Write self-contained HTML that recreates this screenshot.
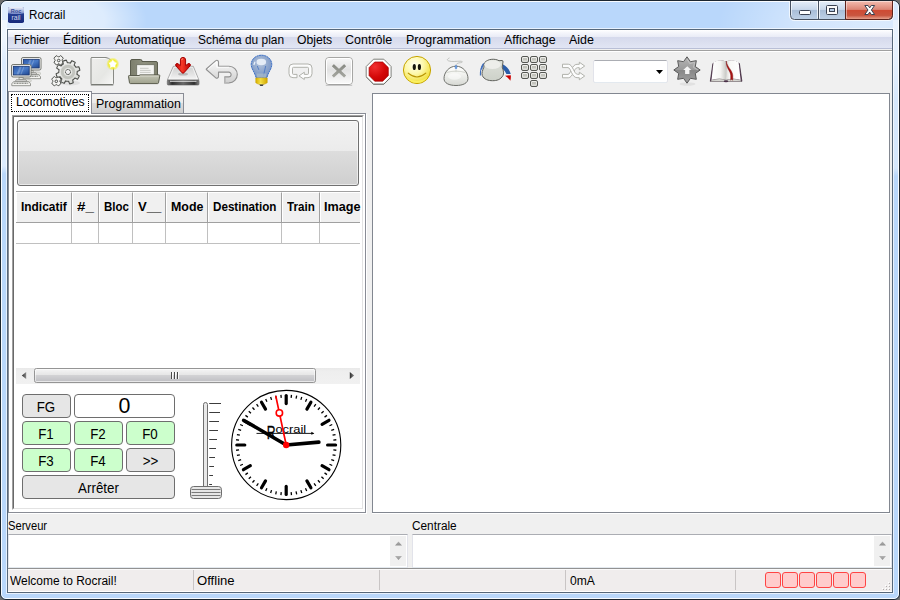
<!DOCTYPE html>
<html lang="fr">
<head>
<meta charset="utf-8">
<title>Rocrail</title>
<style>
html,body{margin:0;padding:0;}
body{width:900px;height:600px;overflow:hidden;background:#6e6e6e;font-family:"Liberation Sans",sans-serif;font-size:12px;color:#000;position:relative;}
div,span{box-sizing:border-box;}
.a{position:absolute;}
#win{position:absolute;left:0;top:0;width:900px;height:600px;border:1px solid #1c2630;border-radius:7px 7px 6px 6px;background:#b9d7fb;overflow:hidden;}
#wp{position:absolute;left:-1px;top:-1px;width:900px;height:600px;}
#glow1{position:absolute;left:-75px;top:-35px;width:240px;height:110px;background:radial-gradient(closest-side,rgba(255,255,255,.60) 0%,rgba(255,255,255,.52) 50%,rgba(255,255,255,0) 85%);}
#glow2{position:absolute;left:700px;top:-60px;width:360px;height:170px;background:radial-gradient(closest-side,rgba(255,255,255,.48) 0%,rgba(255,255,255,.36) 45%,rgba(255,255,255,0) 90%);}
#inhl{position:absolute;left:1px;top:1px;width:898px;height:598px;border:1px solid rgba(255,255,255,.9);border-radius:6px 6px 5px 5px;}
#client{position:absolute;left:7px;top:29px;width:886px;height:564px;border:1px solid #56677a;background:#f0f0f0;overflow:hidden;}
#clhl{position:absolute;left:6px;top:28px;width:888px;height:566px;border:1px solid rgba(255,255,255,.65);}
#pg{position:absolute;left:-8px;top:-30px;width:900px;height:600px;}
.t{position:absolute;white-space:nowrap;line-height:14px;height:14px;transform-origin:0 50%;}
#menubar{left:8px;top:30px;width:884px;height:19px;background:linear-gradient(#ffffff 0px,#f4f5fb 3px,#e9ebf6 7px,#d5d9ec 7px,#dbdfef 12px,#e1e5f4 18px,#b9bfd6 18px,#b9bfd6 19px);}
.ln{position:absolute;height:1px;}
.vl{position:absolute;width:1px;}
/* caption buttons */
.cb{position:absolute;top:0;height:20px;border:1px solid #46566a;border-top:none;}
/* notebook */
#page{left:8px;top:113px;width:358px;height:400px;border:1px solid #898c95;background:#fff;}
#sunk{left:12px;top:115px;width:352px;height:395px;border-top:1px solid #a0a0a0;border-left:1px solid #a0a0a0;border-right:1px solid #fff;border-bottom:1px solid #fff;}
#sunk2{left:13px;top:116px;width:350px;height:393px;border-top:1px solid #696969;border-left:1px solid #696969;border-right:1px solid #e3e3e3;border-bottom:1px solid #e3e3e3;}
#tab1{left:8px;top:91px;width:84px;height:23px;border:1px solid #898c95;border-bottom:none;background:#fff;}
#tab1f{left:11px;top:94px;width:78px;height:18px;border:1px dotted #000;}
#tab2{left:91px;top:93px;width:93px;height:20px;border:1px solid #898c95;border-bottom:none;background:linear-gradient(#f2f2f2 0,#ebebeb 9px,#dddddd 9px,#cfcfcf 19px);}
#bigbtn{left:17px;top:120px;width:342px;height:66px;border:1px solid #707070;border-radius:3px;background:linear-gradient(#f2f2f2 0,#ebebeb 30px,#dddddd 30px,#cfcfcf 64px);box-shadow:inset 0 0 0 1px rgba(255,255,255,.55);}
.hd{position:absolute;top:192px;height:30px;border-top:1px solid #fff;background:#f0f0f0;border-right:1px solid #a0a0a0;border-left:1px solid #fff;}
.rb{position:absolute;border:1px solid #6e6e6e;border-radius:4px;background:#e6e6e6;}
.gr{background:#ccffcc;}
.bt{position:absolute;white-space:nowrap;font:13.8px/14px "Liberation Sans",sans-serif;height:14px;text-align:center;transform:scaleX(.966);}
.led{position:absolute;top:572px;width:16px;height:16px;border:1px solid #ff4444;border-radius:3px;background:#ffcccc;}
.ta{position:absolute;background:#fff;border:1px solid #e2e3ea;border-top-color:#abadb3;border-bottom-color:#e3e9ef;}
</style>
</head>
<body>
<div id="win"><div id="wp">
<div class="a" style="left:1px;top:20px;width:6px;height:156px;background:linear-gradient(rgba(255,255,255,.5) 0,rgba(255,255,255,.5) 146px,rgba(255,255,255,0) 154px)"></div><div class="a" style="left:893px;top:20px;width:6px;height:158px;background:linear-gradient(rgba(255,255,255,.42) 0,rgba(255,255,255,.42) 148px,rgba(255,255,255,0) 156px)"></div><div id="glow1"></div><div id="glow2"></div><div id="inhl"></div><div id="clhl"></div>
<svg class="a" style="left:8px;top:7px" width="16" height="16" viewBox="0 0 16 16">
<defs><linearGradient id="tig" x1="0" y1="0" x2="0" y2="1"><stop offset="0" stop-color="#f0f3fb"/><stop offset="1" stop-color="#7286c6"/></linearGradient>
<linearGradient id="tig2" x1="0" y1="0" x2="0" y2="1"><stop offset="0" stop-color="#2f4da2"/><stop offset="1" stop-color="#17297a"/></linearGradient></defs>
<rect x="0" y="0" width="16" height="16" rx="1.800" fill="url(#tig2)"/>
<path d="M0 1.800a1.800 1.800 0 0 1 1.800-1.800h12.400a1.800 1.800 0 0 1 1.800 1.800v4.400q-8 1.800-16 0z" fill="url(#tig)"/>
<text x="8" y="5.700" font-family="Liberation Sans,sans-serif" font-size="6" font-weight="bold" fill="#3a4e98" text-anchor="middle" textLength="10.500" lengthAdjust="spacingAndGlyphs">Roc</text>
<text x="8" y="13.400" font-family="Liberation Sans,sans-serif" font-size="7" fill="#d4dcf2" text-anchor="middle" textLength="9" lengthAdjust="spacingAndGlyphs">rail</text>
</svg>

<span class="t" style="left:29.23px;top:8px;font:12px/14px 'Liberation Sans',sans-serif;transform:scaleX(0.9722)">Rocrail</span>
<svg class="a" style="left:788px;top:0px" width="108" height="24" viewBox="788 0 108 24">
<defs>
<linearGradient id="cbg" x1="0" y1="0" x2="0" y2="1"><stop offset="0" stop-color="#e6eff9"/><stop offset=".47" stop-color="#c8d8ea"/><stop offset=".5" stop-color="#a8bdd7"/><stop offset="1" stop-color="#bdd0e6"/></linearGradient>
<linearGradient id="cbr" x1="0" y1="0" x2="0" y2="1"><stop offset="0" stop-color="#f4bcb0"/><stop offset=".47" stop-color="#dc8575"/><stop offset=".5" stop-color="#cf4a33"/><stop offset=".8" stop-color="#c9553f"/><stop offset="1" stop-color="#e6a08c"/></linearGradient>
</defs>
<path d="M790.5 0.5V15.5a4 4 0 0 0 4 4H888.5a4 4 0 0 0 4-4V0.5" fill="none" stroke="rgba(255,255,255,.7)" stroke-width="3"/>
<path d="M791 1H845V19H795a4 4 0 0 1-4-4Z" fill="url(#cbg)"/>
<path d="M845 1H892V15a4 4 0 0 1-4 4H845Z" fill="url(#cbr)"/>
<path d="M791.5 1.5H817.5V18.5" fill="none" stroke="rgba(255,255,255,.75)"/>
<path d="M791.5 1.5V15" fill="none" stroke="rgba(255,255,255,.6)"/>
<path d="M819.5 18.5V1.5H844.5" fill="none" stroke="rgba(255,255,255,.75)"/>
<path d="M846.5 18V1.5H891.5" fill="none" stroke="rgba(255,255,255,.45)"/>
<path d="M790.5 0.5V15.5a4 4 0 0 0 4 4H888.5a4 4 0 0 0 4-4V0.5" fill="none" stroke="#46505f"/>
<path d="M845.5 1V19M845.5 19.5H888.5a4 4 0 0 0 4-4V1" fill="none" stroke="#5e231b"/>
<path d="M818.5 1V19" stroke="#46505f"/>
<rect x="799.5" y="10.5" width="11" height="4" rx="1" fill="#fff" stroke="#3a4252"/>
<path d="M826.5 6.5a1 1 0 0 1 1-1h9a1 1 0 0 1 1 1v7a1 1 0 0 1-1 1h-9a1 1 0 0 1-1-1Z" fill="#fafafa" stroke="#3a4252"/>
<rect x="829.5" y="8.500" width="5" height="3" fill="#b4cae4" stroke="#3a4252"/>
<path d="M864.8 5.500h3.300l1.600 2.400 1.600-2.400h3.300l-3.200 4.500 3.200 4.500h-3.300l-1.600-2.400-1.600 2.400h-3.300l3.200-4.500Z" fill="#fff" stroke="#3a4252" stroke-width="1" stroke-linejoin="round"/>
</svg>

<div id="client"><div id="pg">
<div id="menubar" class="a"></div>
<div class="ln" style="left:8px;top:50px;width:884px;background:#a0a0a0"></div>
<div class="ln" style="left:8px;top:51px;width:884px;background:#fff"></div>
<span class="t" style="left:14.12px;top:33px;font:12px/14px 'Liberation Sans',sans-serif;transform:scaleX(0.9771)">Fichier</span>
<span class="t" style="left:63.37px;top:33px;font:12px/14px 'Liberation Sans',sans-serif;transform:scaleX(1.0286)">Édition</span>
<span class="t" style="left:115.00px;top:33px;font:12px/14px 'Liberation Sans',sans-serif;transform:scaleX(1.0448)">Automatique</span>
<span class="t" style="left:198.31px;top:33px;font:12px/14px 'Liberation Sans',sans-serif;transform:scaleX(0.9918)">Schéma du plan</span>
<span class="t" style="left:297.28px;top:33px;font:12px/14px 'Liberation Sans',sans-serif;transform:scaleX(1.0152)">Objets</span>
<span class="t" style="left:345.46px;top:33px;font:12px/14px 'Liberation Sans',sans-serif;transform:scaleX(1.0432)">Contrôle</span>
<span class="t" style="left:405.56px;top:33px;font:12px/14px 'Liberation Sans',sans-serif;transform:scaleX(1.0362)">Programmation</span>
<span class="t" style="left:504.20px;top:33px;font:12px/14px 'Liberation Sans',sans-serif;transform:scaleX(1.0367)">Affichage</span>
<span class="t" style="left:569.20px;top:33px;font:12px/14px 'Liberation Sans',sans-serif;transform:scaleX(1.0348)">Aide</span>
<svg class="a" style="left:8px;top:52px" width="760" height="39" viewBox="8 52 760 39">
<defs>
<linearGradient id="scr" x1="0" y1="0" x2="1" y2="1"><stop offset="0" stop-color="#2c58a8"/><stop offset=".5" stop-color="#4a7cc8"/><stop offset="1" stop-color="#1e4690"/></linearGradient>
<linearGradient id="mon" x1="0" y1="0" x2="0" y2="1"><stop offset="0" stop-color="#f4f4f2"/><stop offset="1" stop-color="#c4c5c0"/></linearGradient>
<linearGradient id="gearg" x1="0" y1="0" x2="1" y2="1"><stop offset="0" stop-color="#fafafa"/><stop offset="1" stop-color="#d3d5d0"/></linearGradient>
<linearGradient id="pageg" x1="0" y1="0" x2="1" y2="1"><stop offset="0" stop-color="#eeeeec"/><stop offset=".6" stop-color="#e6e7e4"/><stop offset="1" stop-color="#f8f8f7"/></linearGradient>
<radialGradient id="starg"><stop offset="0" stop-color="#ffffff"/><stop offset=".35" stop-color="#ffffc0"/><stop offset=".6" stop-color="#f2ee2a"/><stop offset="1" stop-color="#f2ee2a" stop-opacity="0"/></radialGradient>
<linearGradient id="fback" x1="0" y1="0" x2="1" y2="0"><stop offset="0" stop-color="#7d7f6d"/><stop offset=".5" stop-color="#8f917f"/><stop offset="1" stop-color="#80826f"/></linearGradient>
<linearGradient id="ffront" x1="0" y1="0" x2="0" y2="1"><stop offset="0" stop-color="#c3c5b4"/><stop offset="1" stop-color="#a0a28e"/></linearGradient>
<linearGradient id="trayg" x1="0" y1="0" x2="0" y2="1"><stop offset="0" stop-color="#cfcfcf"/><stop offset=".6" stop-color="#e4e4e4"/><stop offset="1" stop-color="#f6f6f6"/></linearGradient>
<linearGradient id="trayb" x1="0" y1="0" x2="1" y2="0"><stop offset="0" stop-color="#8a8a8a"/><stop offset=".15" stop-color="#2e2e2e"/><stop offset=".5" stop-color="#6c6c6c"/><stop offset=".85" stop-color="#303030"/><stop offset="1" stop-color="#8a8a8a"/></linearGradient>
<linearGradient id="redar" x1="0" y1="0" x2="1" y2="0"><stop offset="0" stop-color="#c00000"/><stop offset=".42" stop-color="#f83a28"/><stop offset="1" stop-color="#b80000"/></linearGradient>
<linearGradient id="undog" x1="0" y1="0" x2="0" y2="1"><stop offset="0" stop-color="#fafafa"/><stop offset="1" stop-color="#cfcfcf"/></linearGradient>
<radialGradient id="bulbg" cx=".45" cy=".35" r=".7"><stop offset="0" stop-color="#b4c4dc"/><stop offset=".6" stop-color="#8aa3cb"/><stop offset="1" stop-color="#7590c4"/></radialGradient>
<linearGradient id="bulbb" x1="0" y1="0" x2="1" y2="0"><stop offset="0" stop-color="#d8b000"/><stop offset=".4" stop-color="#fff060"/><stop offset="1" stop-color="#d0a400"/></linearGradient>
<linearGradient id="xbg" x1="0" y1="0" x2="0" y2="1"><stop offset="0" stop-color="#f8f8f8"/><stop offset=".45" stop-color="#e2e2e2"/><stop offset="1" stop-color="#fbfbfb"/></linearGradient>
<linearGradient id="xg" x1="0" y1="0" x2="0" y2="1"><stop offset="0" stop-color="#84867f"/><stop offset="1" stop-color="#b4b5af"/></linearGradient>
<radialGradient id="stopg" cx=".3" cy=".25" r=".9"><stop offset="0" stop-color="#f23030"/><stop offset=".6" stop-color="#d40808"/><stop offset="1" stop-color="#c00000"/></radialGradient>
<radialGradient id="smg" cx=".4" cy=".3" r=".8"><stop offset="0" stop-color="#fffff0"/><stop offset=".42" stop-color="#fdf8ac"/><stop offset=".8" stop-color="#f3e248"/><stop offset="1" stop-color="#e4cb24"/></radialGradient>
<linearGradient id="mouseg" x1="0" y1="0" x2="0" y2="1"><stop offset="0" stop-color="#ffffff"/><stop offset=".35" stop-color="#f4f5f2"/><stop offset="1" stop-color="#d6d8d3"/></linearGradient>
<linearGradient id="knobg" x1="0" y1="0" x2="0" y2="1"><stop offset="0" stop-color="#dfe2db"/><stop offset="1" stop-color="#cdd1c9"/></linearGradient>
<linearGradient id="keyg" x1="0" y1="0" x2="0" y2="1"><stop offset="0" stop-color="#f2f2ef"/><stop offset="1" stop-color="#d8d9d4"/></linearGradient>
<linearGradient id="badgeg" x1="0" y1="0" x2="0" y2="1"><stop offset="0" stop-color="#b4b4b4"/><stop offset=".5" stop-color="#9a9a9a"/><stop offset=".52" stop-color="#888888"/><stop offset="1" stop-color="#a2a2a2"/></linearGradient>
<linearGradient id="bookl" x1="0" y1="0" x2="1" y2="0"><stop offset="0" stop-color="#ffffff"/><stop offset=".6" stop-color="#f6f6f4"/><stop offset="1" stop-color="#c9cac6"/></linearGradient>
<linearGradient id="bookr" x1="0" y1="0" x2="1" y2="0"><stop offset="0" stop-color="#d9dad6"/><stop offset=".25" stop-color="#f8f8f6"/><stop offset="1" stop-color="#ffffff"/></linearGradient>
<g id="key"><rect x=".5" y=".5" width="7" height="6" rx="1.500" fill="url(#keyg)" stroke="#555753"/><rect x="2" y="2" width="4" height="2.500" fill="#c3c4bd"/></g>
<g id="pc">
<path d="M8 13.300h4.200v2.400h-4.200z" fill="#e4e5e0" stroke="#7c7e78" stroke-width=".7"/>
<path d="M5.300 15.700h9.600l.9 1.500h-11.400z" fill="#f2f2ef" stroke="#7c7e78" stroke-width=".7"/>
<rect x=".5" y=".5" width="19.500" height="12.500" rx="1.600" fill="url(#mon)" stroke="#74766f"/>
<rect x="1.500" y="1.500" width="17.500" height="10.500" rx="1" fill="none" stroke="#fff" stroke-width=".7" opacity=".8"/>
<rect x="2.300" y="2.300" width="15.900" height="8.600" fill="url(#scr)" stroke="#16336e" stroke-width=".8"/>
<path d="M8.500 2.700h2.200l-3 7.800h-2.200zM12.300 2.700h1.200l-3 7.800h-1.200z" fill="#fff" opacity=".22"/>
<path d="M.8 19.800l1.700-2.100h15.200l1.800 2.100v1.900h-18.700z" fill="#f4f4f1" stroke="#7c7e78" stroke-width=".8"/>
<path d="M2.800 19.300h14.600" stroke="#6c6e68" stroke-width="1.100" stroke-dasharray="1.100 .5"/>
</g>
</defs>
<!-- 1 computers -->
<ellipse cx="36" cy="73.500" rx="5" ry="1.600" fill="#e4e4e0" stroke="#b0b1ab" stroke-width=".6"/>
<use href="#pc" x="21" y="57"/>
<ellipse cx="26.500" cy="80.800" rx="5" ry="1.500" fill="#e4e4e0" stroke="#b0b1ab" stroke-width=".6"/>
<use href="#pc" x="11" y="64"/>
<!-- 2 gears -->
<path d="M59.20 56.85L60.33 55.61A5.00 5.00 0 0 1 63.29 58.57L62.05 59.70A3.50 3.50 0 0 1 62.05 60.90L63.29 62.03A5.00 5.00 0 0 1 60.33 64.99L59.20 63.75A3.50 3.50 0 0 1 58.00 63.75L56.87 64.99A5.00 5.00 0 0 1 53.91 62.03L55.15 60.90A3.50 3.50 0 0 1 55.15 59.70L53.91 58.57A5.00 5.00 0 0 1 56.87 55.61L58.00 56.85A3.50 3.50 0 0 1 59.20 56.85Z" fill="#f4f4f2" stroke="#555753" stroke-width="1" stroke-linejoin="round"/>
<path d="M57.00 77.75L58.13 76.51A5.00 5.00 0 0 1 61.09 79.47L59.85 80.60A3.50 3.50 0 0 1 59.85 81.80L61.09 82.93A5.00 5.00 0 0 1 58.13 85.89L57.00 84.65A3.50 3.50 0 0 1 55.80 84.65L54.67 85.89A5.00 5.00 0 0 1 51.71 82.93L52.95 81.80A3.50 3.50 0 0 1 52.95 80.60L51.71 79.47A5.00 5.00 0 0 1 54.67 76.51L55.80 77.75A3.50 3.50 0 0 1 57.00 77.75Z" fill="#f4f4f2" stroke="#555753" stroke-width="1" stroke-linejoin="round"/>
<ellipse cx="70" cy="83" rx="10" ry="2.500" fill="#000" opacity=".06"/>
<path d="M70.30 63.09L71.91 60.65A12.00 12.00 0 0 1 75.22 62.42L74.10 65.11A9.20 9.20 0 0 1 75.93 67.33L78.79 66.74A12.00 12.00 0 0 1 79.88 70.33L77.18 71.44A9.20 9.20 0 0 1 76.91 74.30L79.35 75.91A12.00 12.00 0 0 1 77.58 79.22L74.89 78.10A9.20 9.20 0 0 1 72.67 79.93L73.26 82.79A12.00 12.00 0 0 1 69.67 83.88L68.56 81.18A9.20 9.20 0 0 1 65.70 80.91L64.09 83.35A12.00 12.00 0 0 1 60.78 81.58L61.90 78.89A9.20 9.20 0 0 1 60.07 76.67L57.21 77.26A12.00 12.00 0 0 1 56.12 73.67L58.82 72.56A9.20 9.20 0 0 1 59.09 69.70L56.65 68.09A12.00 12.00 0 0 1 58.42 64.78L61.11 65.90A9.20 9.20 0 0 1 63.33 64.07L62.74 61.21A12.00 12.00 0 0 1 66.33 60.12L67.44 62.82A9.20 9.20 0 0 1 70.30 63.09Z" fill="url(#gearg)" stroke="#4c4e4a" stroke-width="1.100" stroke-linejoin="round"/>
<circle cx="68" cy="72" r="7.700" fill="#c2c4be"/>
<circle cx="68" cy="72" r="7.700" fill="none" stroke="#e6e6e3" stroke-width=".8"/>
<circle cx="68" cy="72" r="4.300" fill="#e4e5e1"/>
<circle cx="68" cy="72" r="2.500" fill="#f0f0f0" stroke="#3e403c" stroke-width="1" stroke-dasharray="1.600 .5"/>
<circle cx="58.700" cy="60.500" r="1.300" fill="#f0f0f0" stroke="#4c4e4a" stroke-width="1"/>
<circle cx="56.300" cy="81.300" r="1.300" fill="#f0f0f0" stroke="#4c4e4a" stroke-width="1"/>
<!-- 3 new -->
<path d="M91.500 57.500h14.500q5 1 7.500 6.500v19.500a1 1 0 0 1-1 1h-20.500a1 1 0 0 1-1-1v-25a1 1 0 0 1 1-1z" fill="url(#pageg)" stroke="#888a85"/>
<path d="M92.500 58.500h13" stroke="#fff" opacity=".8"/>
<path d="M90.800 84.900h22.500" stroke="#6e706b" stroke-width="1.200" opacity=".85"/>
<circle cx="112.800" cy="64" r="6.600" fill="url(#starg)"/>
<path d="M112.800 59.600l1.350 2.850 3.050.4-2.250 2.100.6 3.050-2.750-1.500-2.750 1.500.6-3.050-2.250-2.100 3.050-.4z" fill="#fff"/>
<!-- 4 folder -->
<path d="M130.500 61a1.500 1.500 0 0 1 1.500-1.500h8.500a1.500 1.500 0 0 1 1.500 1.500v.5h14a1.500 1.500 0 0 1 1.500 1.500v13h-27z" fill="url(#fback)" stroke="#595b4c"/>
<rect x="136.700" y="64.700" width="17.600" height="11" fill="#f4f4f2" stroke="#6b6d5f" stroke-width=".8"/>
<path d="M140 68.300h8.600M140 70.400h10.600M140 72.400h10.600" stroke="#c4c5c0" stroke-width=".9"/>
<path d="M128.500 76.300a.8.800 0 0 1 .8-.8h9.700l1-.6h19a.8.800 0 0 1 .8.900l-1.300 7a1 1 0 0 1-1 .8h-27a1 1 0 0 1-1-.8z" fill="url(#ffront)" stroke="#595b4c"/>
<path d="M129.800 76.600h9.500l1-.6h18.300" stroke="#dfe0d4" stroke-width=".8" fill="none"/>
<!-- 5 download -->
<path d="M173.300 66.300h20l5.600 13.700h-31.600z" fill="url(#trayg)" stroke="#9c9c9c" stroke-width=".8"/>
<path d="M174 67.200h18.600l4.800 12h-28.400z" fill="none" stroke="#fff" stroke-width=".8" opacity=".8"/>
<ellipse cx="183" cy="74" rx="5" ry="1.600" fill="#b9b9b9"/>
<rect x="167.300" y="80" width="31.700" height="5" rx="1" fill="url(#trayb)" stroke="#5a5a5a" stroke-width=".6"/>
<path d="M170 81.200h26.500" stroke="#e8e8e8" stroke-width="1.100"/>
<path d="M180.400 60a2.600 2.600 0 0 1 5.200 0v5.600l2.400-1.800a1.500 1.500 0 0 1 2.100 2.100l-6.300 7a1.100 1.100 0 0 1-1.600 0l-6.300-7a1.500 1.500 0 0 1 2.100-2.100l2.400 1.800z" fill="url(#redar)" stroke="#a40000" stroke-width="1" stroke-linejoin="round"/>
<path d="M181.600 60.200a1.500 1.500 0 0 1 1.400-1.500" stroke="#ff9a80" stroke-width=".8" fill="none"/>
<!-- 6 undo -->
<path d="M206.300 69l9.500-8.300a1.600 1.600 0 0 1 2.700 1.200v4.400h10.500a8.300 8.300 0 0 1 0 16.600h-4.300v-6h4a2.400 2.400 0 0 0 0-4.800h-10.200v4.500a1.600 1.600 0 0 1-2.700 1.200l-9.500-8.300a.4.400 0 0 1 0-.5z" fill="url(#undog)" stroke="#919191" stroke-width="1.100" stroke-linejoin="round"/>
<path d="M224.800 77.200v5.400h4.300" stroke="#b8b8b8" stroke-width="1.300" fill="none"/>
<path d="M208 69l8.800-7.400v5.700h12.200" stroke="#fff" stroke-width=".9" fill="none" opacity=".9"/>
<!-- 7 bulb -->
<path d="M261.500 55.200c6 0 10.300 4.300 10.300 9.300 0 4.200-3.500 7.500-4.900 13.300h-10.800c-1.400-5.800-4.900-9.100-4.900-13.300 0-5 4.300-9.300 10.300-9.300z" fill="url(#bulbg)" stroke="#3f72c6" stroke-width="1" stroke-dasharray="2.200 .5"/>
<ellipse cx="261.300" cy="62" rx="4.800" ry="3.300" fill="#e9f0f8" opacity=".92"/>
<path d="M254 64.500l.8-2.300" stroke="#e9f0f8" stroke-width="1.300" stroke-linecap="round"/>
<path d="M257.300 66l1.500 3.800M265.700 66l-2.200 9.500" stroke="#4d78c2" stroke-width=".9" fill="none"/>
<path d="M256.500 73.500h10l-.6 4.200h-8.800z" fill="#a9bcc9" opacity=".7"/>
<path d="M255.800 78h11.400v4.800q-2 1.700-5.700 1.700t-5.700-1.700z" fill="url(#bulbb)" stroke="#c8a000" stroke-width=".6"/>
<path d="M256 80h11M256 82h11" stroke="#d9b400" stroke-width=".6"/>
<path d="M259.300 84.500h4.400l-1 1.400h-2.400z" fill="#3c3c3c"/>
<!-- 8 repeat -->
<path d="M297 77.700h-4a4 4 0 0 1-4-4v-5.700a4 4 0 0 1 4-4h15a4 4 0 0 1 4 4v5.700a4 4 0 0 1-4 4h-3.700v1.800l-5.300-3.600 5.300-3.700v2.200h3.200a1 1 0 0 0 1-1v-5.100a1 1 0 0 0-1-1h-14a1 1 0 0 0-1 1v5.100a1 1 0 0 0 1 1h3.500z" fill="#fcfcfc" stroke="#b1b2ac" stroke-width="1" stroke-linejoin="round"/>
<!-- 9 x button -->
<rect x="325.500" y="57.500" width="27" height="27" rx="3.500" fill="url(#xbg)" stroke="#a6a6a4"/>
<rect x="326.500" y="58.500" width="25" height="25" rx="2.500" fill="none" stroke="#fff"/>
<path d="M325.800 85.300h26.400" stroke="#8d8d8b" opacity=".5"/>
<path d="M332.900 65.200l12.200 11.300M345.100 65.200l-12.200 11.300" stroke="url(#xg)" stroke-width="2.900"/>
<path d="M332.900 65.200l12.200 11.300M345.100 65.200l-12.200 11.300" stroke="#91938c" stroke-width="2.900" opacity=".45"/>
<!-- 10 stop -->
<path d="M373.500 59.200h10.300l7.300 7.300v10.300l-7.300 7.300h-10.300l-7.300-7.300v-10.300z" fill="#fff" stroke="#80827c" stroke-width="1"/>
<path d="M374.700 62h8l5.600 5.600v8l-5.600 5.600h-8l-5.600-5.600v-8z" fill="url(#stopg)" stroke="#a40000" stroke-width=".7"/>
<path d="M366.300 77l7.200 7.300h10.300l7.300-7.300" stroke="#55564f" stroke-width="1" fill="none" opacity=".55"/>
<!-- 11 smiley -->
<circle cx="417" cy="70" r="13.600" fill="url(#smg)" stroke="#c6a400" stroke-width="1"/>
<path d="M406 76.500a12.500 12.500 0 0 0 22 0a16 16 0 0 1-22 0z" fill="#fbf264" opacity=".8"/>
<ellipse cx="414.300" cy="67" rx="1.600" ry="3.100" fill="#16160e"/>
<ellipse cx="419.400" cy="67" rx="1.600" ry="3.100" fill="#16160e"/>
<path d="M408.200 73.200q8.800 7.600 17.600 0" stroke="#b89200" stroke-width="1.100" fill="none" stroke-linecap="round"/>
<!-- 12 mouse -->
<path d="M456 66.200c7.200 0 12 6.400 12 12.300 0 4.600-5 7-12 7s-12-2.400-12-7c0-5.900 4.800-12.300 12-12.300z" fill="url(#mouseg)" stroke="#6f716c" stroke-width="1"/>
<path d="M446 72.600q10-3 20 0" stroke="#d6d8d2" stroke-width="1.100" fill="none"/>
<ellipse cx="454.500" cy="76.500" rx="6.500" ry="3.200" fill="#fff" opacity=".5"/>
<path d="M456 69.500v2.600" stroke="#d0d2cc" stroke-width=".8"/>
<path d="M456 66.300c-.3-3 2-3.300 4.500-3.600s2.600-1.500-.5-1.500-8.500.8-11.300-.3-.6-2.300.8-3" stroke="#b4b6b2" stroke-width=".8" fill="none"/>
<rect x="455.100" y="65.300" width="1.800" height="3.600" rx=".9" fill="#6c9ede" stroke="#4a7ccc" stroke-width=".4"/>
<!-- 13 knob -->
<path d="M483 64.500q-3 4.500-2.600 11" stroke="#3f6fbd" stroke-width="1.100" fill="none"/>
<path d="M483.800 63.500q-2 3-2.400 6" stroke="#3f6fbd" stroke-width="1.600" fill="none"/>
<path d="M502.800 64.200q6.200 3.300 8 9.800l-4.400 0q-1.200-3.400-4.400-5.200z" fill="#2c5ea9"/>
<path d="M505 75.800l5.800-.6q.3 3-.5 5.600q-2-3.200-5.300-5z" fill="#cc0000"/>
<path d="M484.800 62.500c2.600-3.300 9.800-4.400 14.200-1.800l3-.2q1.200 0 1 1.500l-.8 5.100c1.500 4 1.800 6.600.8 8.400-2.400 4.200-6.200 5.200-10.400 5.200s-8.600-1.200-10.300-5.200c-.9-2.300.3-5.400 1.600-8.300q-.3-2.600.9-4.700z" fill="url(#knobg)" stroke="#5f615c" stroke-width="1"/>
<ellipse cx="492.500" cy="64.600" rx="8.200" ry="4.300" fill="#edeeea"/>
<!-- 14 keypad -->
<use href="#key" x="521" y="56"/><use href="#key" x="530" y="56"/><use href="#key" x="539" y="56"/>
<use href="#key" x="521" y="64"/><use href="#key" x="530" y="64"/><use href="#key" x="539" y="64"/>
<use href="#key" x="521" y="72"/><use href="#key" x="530" y="72"/><use href="#key" x="539" y="72"/>
<use href="#key" x="530" y="80"/>
<!-- 15 shuffle -->
<g fill="#fcfcfc" stroke="#b1b2ac" stroke-width="1" stroke-linejoin="round">
<path d="M562.500 77.800h5.800c4.600 0 5.600-10.100 9.200-10.100h1.800v2.100l5.400-3.800-5.400-3.800v2.100h-2.300c-5.200 0-6.200 10.100-9 10.100h-5.500z"/>
<path d="M562.500 64.200h5.800c4.600 0 5.600 10.100 9.200 10.100h1.800v-2.100l5.400 3.800-5.400 3.800v-2.100h-2.300c-5.200 0-6.200-10.100-9-10.100h-5.500z"/>
</g>
<!-- 16 combo -->
<rect x="593.500" y="60.500" width="74" height="22" rx="1.500" fill="#fff" stroke="#e2e3ea"/>
<path d="M594.500 60.500h72" stroke="#abadb3"/>
<path d="M594.500 82.500h72" stroke="#e3e9ef"/>
<path d="M656 70h7l-3.500 4z" fill="#000"/>
<!-- 17 badge -->
<ellipse cx="687.500" cy="84" rx="8" ry="1.800" fill="#000" opacity=".06"/>
<path d="M687.00 56.80L690.44 61.69L696.33 60.67L695.31 66.56L700.20 70.00L695.31 73.44L696.33 79.33L690.44 78.31L687.00 83.20L683.56 78.31L677.67 79.33L678.69 73.44L673.80 70.00L678.69 66.56L677.67 60.67L683.56 61.69Z" fill="url(#badgeg)" stroke="#5a5a5a" stroke-width="1" stroke-linejoin="round"/>
<path d="M687 59.200l2.700 4.300 4.900-1.100-1.100 4.900 4.400 2.700" fill="none" stroke="#d0d0d0" stroke-width=".8" opacity=".8"/>
<path d="M687.300 66.300l4 3.700h-1.900v4h-4.300v-4h-1.900z" fill="#f4f4f4"/>
<!-- 18 book -->
<path d="M710.300 81.300l2.600-17.800q6.500-4.300 13-1.600 7-2.700 13.500 1.600l2.500 17.800z" fill="#5b3d57" stroke="#3d2a3b" stroke-width=".8" stroke-linejoin="round"/>
<path d="M713.500 62.300q6.300-3.600 12.400-.9l.2 18.500q-6.800-2.300-14.600.2z" fill="url(#bookl)"/>
<path d="M738.600 62.300q-6.300-3.600-12.400-.9l-.2 18.500q6.800-2.300 14.600.2z" fill="url(#bookr)"/>
<path d="M711.500 80.300q7.800-2.600 14.500-.3q6.700-2.300 14.500.3l.6 1h-30.200z" fill="#dcddd8" stroke="#a8a9a4" stroke-width=".5"/>
<ellipse cx="726" cy="81.300" rx="2.300" ry="1" fill="#4a3048"/>
<path d="M726.400 61.200c.5 6 6.300 9 6.400 14.500l0 4.600-1.100-1-1 1 0-4.600c-.1-5-5-7.500-4.300-14.500z" fill="#a81414" stroke="#7e0c0c" stroke-width=".4"/>
</svg>

<!-- notebook -->
<div class="a" style="left:9px;top:114px;width:358px;height:400px;background:#fff"></div>
<div class="ln" style="left:372px;top:513px;width:518px;background:#fff"></div>
<div id="page" class="a"></div>
<div id="sunk" class="a"></div><div id="sunk2" class="a"></div>
<div id="tab2" class="a"></div>
<div id="tab1" class="a"></div><div id="tab1f" class="a"></div>
<div id="bigbtn" class="a"></div>
<!-- grid -->
<div class="ln" style="left:16px;top:191px;width:344px;background:#a0a0a0"></div>

<div class="hd" style="left:16px;width:56px"></div>
<div class="hd" style="left:72px;width:27px"></div>
<div class="hd" style="left:99px;width:34px"></div>
<div class="hd" style="left:133px;width:33px"></div>
<div class="hd" style="left:166px;width:42px"></div>
<div class="hd" style="left:208px;width:74px"></div>
<div class="hd" style="left:282px;width:38px"></div>
<div class="hd" style="left:320px;width:40px;border-right:none"></div>
<div class="ln" style="left:16px;top:222px;width:344px;background:#a0a0a0"></div>
<div class="ln" style="left:16px;top:243px;width:344px;background:#c0c0c0"></div>
<div class="vl" style="left:71px;top:223px;height:20px;background:#c0c0c0"></div>
<div class="vl" style="left:98px;top:223px;height:20px;background:#c0c0c0"></div>
<div class="vl" style="left:132px;top:223px;height:20px;background:#c0c0c0"></div>
<div class="vl" style="left:165px;top:223px;height:20px;background:#c0c0c0"></div>
<div class="vl" style="left:207px;top:223px;height:20px;background:#c0c0c0"></div>
<div class="vl" style="left:281px;top:223px;height:20px;background:#c0c0c0"></div>
<div class="vl" style="left:319px;top:223px;height:20px;background:#c0c0c0"></div>
<span class="t" style="left:15.88px;top:95px;font:12px/14px 'Liberation Sans',sans-serif;transform:scaleX(1.0182)">Locomotives</span>
<span class="t" style="left:95.67px;top:97px;font:12px/14px 'Liberation Sans',sans-serif;transform:scaleX(1.0350)">Programmation</span>
<span class="t" style="left:20.71px;top:200px;font:bold 12px/14px 'Liberation Sans',sans-serif;transform:scaleX(0.9933)">Indicatif</span>
<span class="t" style="left:77.00px;top:200px;font:bold 12px/14px 'Liberation Sans',sans-serif;transform:scaleX(1.2615)">#_</span>
<span class="t" style="left:104.04px;top:200px;font:bold 12px/14px 'Liberation Sans',sans-serif;transform:scaleX(0.9583)">Bloc</span>
<span class="t" style="left:138.00px;top:200px;font:bold 12px/14px 'Liberation Sans',sans-serif;transform:scaleX(1.0952)">V__</span>
<span class="t" style="left:170.97px;top:200px;font:bold 12px/14px 'Liberation Sans',sans-serif;transform:scaleX(1.0333)">Mode</span>
<span class="t" style="left:213.33px;top:200px;font:bold 12px/14px 'Liberation Sans',sans-serif;transform:scaleX(0.9703)">Destination</span>
<span class="t" style="left:287.10px;top:200px;font:bold 12px/14px 'Liberation Sans',sans-serif;transform:scaleX(0.9679)">Train</span>
<span class="t" style="left:323.95px;top:200px;font:bold 12px/14px 'Liberation Sans',sans-serif;transform:scaleX(1.0545)">Image</span>
<svg class="a" style="left:16px;top:368px" width="344" height="16" viewBox="16 368 344 16">
<defs>
<linearGradient id="thg" x1="0" y1="0" x2="0" y2="1"><stop offset="0" stop-color="#f6f6f6"/><stop offset=".46" stop-color="#e6e6e6"/><stop offset=".5" stop-color="#d2d2d4"/><stop offset=".88" stop-color="#c2c2c6"/><stop offset="1" stop-color="#dadada"/></linearGradient>
<linearGradient id="arg" x1="0" y1="0" x2="1" y2="0"><stop offset="0" stop-color="#2c2c2c"/><stop offset="1" stop-color="#8c8c8c"/></linearGradient>
<linearGradient id="arg2" x1="1" y1="0" x2="0" y2="0"><stop offset="0" stop-color="#8c8c8c"/><stop offset="1" stop-color="#2c2c2c"/></linearGradient>
<linearGradient id="trk" x1="0" y1="0" x2="0" y2="1"><stop offset="0" stop-color="#e9e9e9"/><stop offset=".2" stop-color="#eeeeee"/><stop offset="1" stop-color="#f1f1f1"/></linearGradient>
</defs>
<rect x="16" y="368" width="344" height="16" fill="url(#trk)"/>
<rect x="34.500" y="368.500" width="281" height="14" rx="2" fill="url(#thg)" stroke="#959595"/>
<rect x="35.500" y="369.500" width="279" height="12" rx="1" fill="none" stroke="#fff" opacity=".55"/>
<path d="M21.800 375.500l4.400-3.600v7.200z" fill="url(#arg2)"/>
<path d="M354.200 375.500l-4.400-3.600v7.200z" fill="url(#arg)"/>
<path d="M171.500 372v7M174.500 372v7M177.500 372v7" stroke="#4a4a4a" stroke-width="1"/>
<path d="M172.500 372v7M175.500 372v7M178.500 372v7" stroke="#fff" stroke-width="1" opacity=".85"/>
</svg>

<!-- buttons -->
<div class="rb" style="left:22px;top:394px;width:49px;height:24px"></div>
<div class="rb" style="left:74px;top:394px;width:101px;height:24px;background:#fff"></div>
<div class="rb gr" style="left:22px;top:421px;width:49px;height:24px"></div>
<div class="rb gr" style="left:74px;top:421px;width:49px;height:24px"></div>
<div class="rb gr" style="left:126px;top:421px;width:49px;height:24px"></div>
<div class="rb gr" style="left:22px;top:448px;width:49px;height:24px"></div>
<div class="rb gr" style="left:74px;top:448px;width:49px;height:24px"></div>
<div class="rb" style="left:126px;top:448px;width:49px;height:24px"></div>
<div class="rb" style="left:22px;top:475px;width:153px;height:24px"></div>
<span class="bt" style="left:22px;width:48px;top:401px">FG</span>
<span class="bt" style="left:74px;width:101px;top:394px;font-size:21.33px;line-height:24px;height:24px;transform:none">0</span>
<span class="bt" style="left:22px;width:48px;top:428px">F1</span>
<span class="bt" style="left:74px;width:48px;top:428px">F2</span>
<span class="bt" style="left:126px;width:48px;top:428px">F0</span>
<span class="bt" style="left:22px;width:48px;top:455px">F3</span>
<span class="bt" style="left:74px;width:48px;top:455px">F4</span>
<span class="bt" style="left:126px;width:49px;top:455px">&gt;&gt;</span>
<span class="bt" style="left:22px;width:153px;top:482px">Arrêter</span>
<svg class="a" style="left:186px;top:398px" width="40" height="104" viewBox="186 398 40 104">
<rect x="203.500" y="402.500" width="4" height="86" rx="2" fill="#e8e8e8" stroke="#707070"/>
<g stroke="#3c3c3c" stroke-width="1">
<path d="M209.200 403.500H221"/><path d="M209.200 412.500H220"/><path d="M209.200 421.500H219"/><path d="M209.200 430.500H218"/><path d="M209.200 439.500H217"/><path d="M209.200 448.500H216"/><path d="M209.200 457.500H215"/><path d="M209.200 466.500H214"/><path d="M209.200 475.500H213"/><path d="M209.200 484.500H212"/>
</g>
<rect x="190.500" y="486.500" width="31" height="12" rx="3" fill="#e6e6e6" stroke="#6e6e6e"/>
<path d="M191.500 489.500h29M191.500 492.500h29M191.500 495.500h29" stroke="#7a7a7a" stroke-width="1"/>
</svg>

<svg class="a" style="left:228px;top:387px" width="117" height="117" viewBox="228 387 117 117">
<circle cx="286.2" cy="445" r="54.6" fill="#fff" stroke="#000" stroke-width="1.100"/>
<path d="M286.20 403.60L286.20 395.60" stroke="#000" stroke-width="3.200" stroke-linecap="round"/>
<path d="M306.90 409.15L310.90 402.22" stroke="#000" stroke-width="3.200" stroke-linecap="round"/>
<path d="M322.05 424.30L328.98 420.30" stroke="#000" stroke-width="3.200" stroke-linecap="round"/>
<path d="M327.60 445.00L335.60 445.00" stroke="#000" stroke-width="3.200" stroke-linecap="round"/>
<path d="M322.05 465.70L328.98 469.70" stroke="#000" stroke-width="3.200" stroke-linecap="round"/>
<path d="M306.90 480.85L310.90 487.78" stroke="#000" stroke-width="3.200" stroke-linecap="round"/>
<path d="M286.20 486.40L286.20 494.40" stroke="#000" stroke-width="3.200" stroke-linecap="round"/>
<path d="M265.50 480.85L261.50 487.78" stroke="#000" stroke-width="3.200" stroke-linecap="round"/>
<path d="M250.35 465.70L243.42 469.70" stroke="#000" stroke-width="3.200" stroke-linecap="round"/>
<path d="M244.80 445.00L236.80 445.00" stroke="#000" stroke-width="3.200" stroke-linecap="round"/>
<path d="M250.35 424.30L243.42 420.30" stroke="#000" stroke-width="3.200" stroke-linecap="round"/>
<path d="M265.50 409.15L261.50 402.22" stroke="#000" stroke-width="3.200" stroke-linecap="round"/>
<path d="M291.15 397.86L291.47 394.88M296.06 398.64L296.68 395.70M300.85 399.92L301.77 397.07M305.48 401.70L306.70 398.96M314.06 406.65L315.82 404.23M317.92 409.77L319.92 407.55M321.43 413.28L323.65 411.28M324.55 417.14L326.97 415.38M329.50 425.72L332.24 424.50M331.28 430.35L334.13 429.43M332.56 435.14L335.50 434.52M333.34 440.05L336.32 439.73M333.34 449.95L336.32 450.27M332.56 454.86L335.50 455.48M331.28 459.65L334.13 460.57M329.50 464.28L332.24 465.50M324.55 472.86L326.97 474.62M321.43 476.72L323.65 478.72M317.92 480.23L319.92 482.45M314.06 483.35L315.82 485.77M305.48 488.30L306.70 491.04M300.85 490.08L301.77 492.93M296.06 491.36L296.68 494.30M291.15 492.14L291.47 495.12M281.25 492.14L280.93 495.12M276.34 491.36L275.72 494.30M271.55 490.08L270.63 492.93M266.92 488.30L265.70 491.04M258.34 483.35L256.58 485.77M254.48 480.23L252.48 482.45M250.97 476.72L248.75 478.72M247.85 472.86L245.43 474.62M242.90 464.28L240.16 465.50M241.12 459.65L238.27 460.57M239.84 454.86L236.90 455.48M239.06 449.95L236.08 450.27M239.06 440.05L236.08 439.73M239.84 435.14L236.90 434.52M241.12 430.35L238.27 429.43M242.90 425.72L240.16 424.50M247.85 417.14L245.43 415.38M250.97 413.28L248.75 411.28M254.48 409.77L252.48 407.55M258.34 406.65L256.58 404.23M266.92 401.70L265.70 398.96M271.55 399.92L270.63 397.07M276.34 398.64L275.72 395.70M281.25 397.86L280.93 394.88" stroke="#000" stroke-width="1.300"/>
<text x="266.800" y="439" font-family="Liberation Sans,sans-serif" font-size="17.500" fill="#000" stroke="#000" stroke-width=".35" textLength="8.800" lengthAdjust="spacingAndGlyphs">R</text>
<text x="275.400" y="432.600" font-family="Liberation Sans,sans-serif" font-size="11.200" fill="#000" textLength="30.800" lengthAdjust="spacingAndGlyphs">ocrail</text>
<path d="M256.500 433.400H313.500" stroke="#000" stroke-width=".9"/><path d="M311.300 431.800l3 1.600-3 1.400z" fill="#000"/>
<path d="M286.20 445.00L244.46 420.70" stroke="#000" stroke-width="3.6" stroke-linecap="round"/>
<path d="M286.20 445.00L318.88 442.14" stroke="#000" stroke-width="3.6" stroke-linecap="round"/>
<path d="M286.20 445.00L275.91 396.58" stroke="#ff0000" stroke-width="1.7" stroke-linecap="round"/>
<circle cx="279.38" cy="412.92" r="3.200" fill="#fff" stroke="#ff0000" stroke-width="1.600"/>
<circle cx="286.2" cy="445" r="3.200" fill="#ff0000"/>
</svg>
<!-- right panel -->
<div class="a" style="left:372px;top:93px;width:518px;height:420px;border:1px solid #828790;background:#fff"></div>
<!-- bottom -->
<div class="ta" style="left:8px;top:534px;width:400px;height:34px"></div>
<div class="ta" style="left:412px;top:534px;width:480px;height:34px"></div>
<div class="a" style="left:390px;top:536px;width:16px;height:30px;background:#f0f0f0"></div>
<div class="a" style="left:874px;top:536px;width:16px;height:30px;background:#f0f0f0"></div>
<svg class="a" style="left:390px;top:535px" width="502" height="32" viewBox="390 535 502 32">
<defs><linearGradient id="vag" x1="0" y1="0" x2="0" y2="1"><stop offset="0" stop-color="#b4b4b4"/><stop offset="1" stop-color="#8e8e8e"/></linearGradient></defs>
<path d="M398.500 541.500l3.500 4h-7z" fill="url(#vag)"/>
<path d="M398.500 560l3.500-4h-7z" fill="url(#vag)"/>
<path d="M882.500 541.500l3.500 4h-7z" fill="url(#vag)"/>
<path d="M882.500 560l3.500-4h-7z" fill="url(#vag)"/>
</svg>

<div class="a" style="left:8px;top:568px;width:884px;height:24px;background:#f0eded;border-top:1px solid #929292"></div>
<div class="ln" style="left:8px;top:569px;width:884px;background:#fbfafa"></div>
<div class="vl" style="left:193px;top:570px;height:20px;background:#c9c5c5"></div>
<div class="vl" style="left:379px;top:570px;height:20px;background:#c9c5c5"></div>
<div class="vl" style="left:565px;top:570px;height:20px;background:#c9c5c5"></div>
<div class="vl" style="left:735px;top:570px;height:20px;background:#c9c5c5"></div>
<div class="ln" style="left:8px;top:591px;width:884px;background:#fff"></div>
<div class="led" style="left:765px"></div><div class="led" style="left:782px"></div><div class="led" style="left:799px"></div><div class="led" style="left:816px"></div><div class="led" style="left:833px"></div><div class="led" style="left:850px"></div>
<svg class="a" style="left:878px;top:578px" width="14" height="13" viewBox="878 578 14 13">
<g fill="#fff"><rect x="888" y="582" width="1" height="1"/><rect x="885" y="585" width="1" height="1"/><rect x="888" y="585" width="1" height="1"/><rect x="882" y="588" width="1" height="1"/><rect x="885" y="588" width="1" height="1"/><rect x="888" y="588" width="1" height="1"/></g>
<g fill="#b0acac"><rect x="889" y="583" width="1" height="1"/><rect x="886" y="586" width="1" height="1"/><rect x="889" y="586" width="1" height="1"/><rect x="883" y="589" width="1" height="1"/><rect x="886" y="589" width="1" height="1"/><rect x="889" y="589" width="1" height="1"/></g>
</svg>

<span class="t" style="left:7.77px;top:519px;font:12px/14px 'Liberation Sans',sans-serif;transform:scaleX(0.9293)">Serveur</span>
<span class="t" style="left:411.72px;top:519px;font:12px/14px 'Liberation Sans',sans-serif;transform:scaleX(0.9841)">Centrale</span>
<span class="t" style="left:10.20px;top:574px;font:12px/14px 'Liberation Sans',sans-serif;transform:scaleX(0.9962)">Welcome to Rocrail!</span>
<span class="t" style="left:197.21px;top:574px;font:12px/14px 'Liberation Sans',sans-serif;transform:scaleX(1.0909)">Offline</span>
<span class="t" style="left:569.80px;top:574px;font:12px/14px 'Liberation Sans',sans-serif;transform:scaleX(1.0080)">0mA</span>
</div></div>
</div></div>
</body>
</html>
